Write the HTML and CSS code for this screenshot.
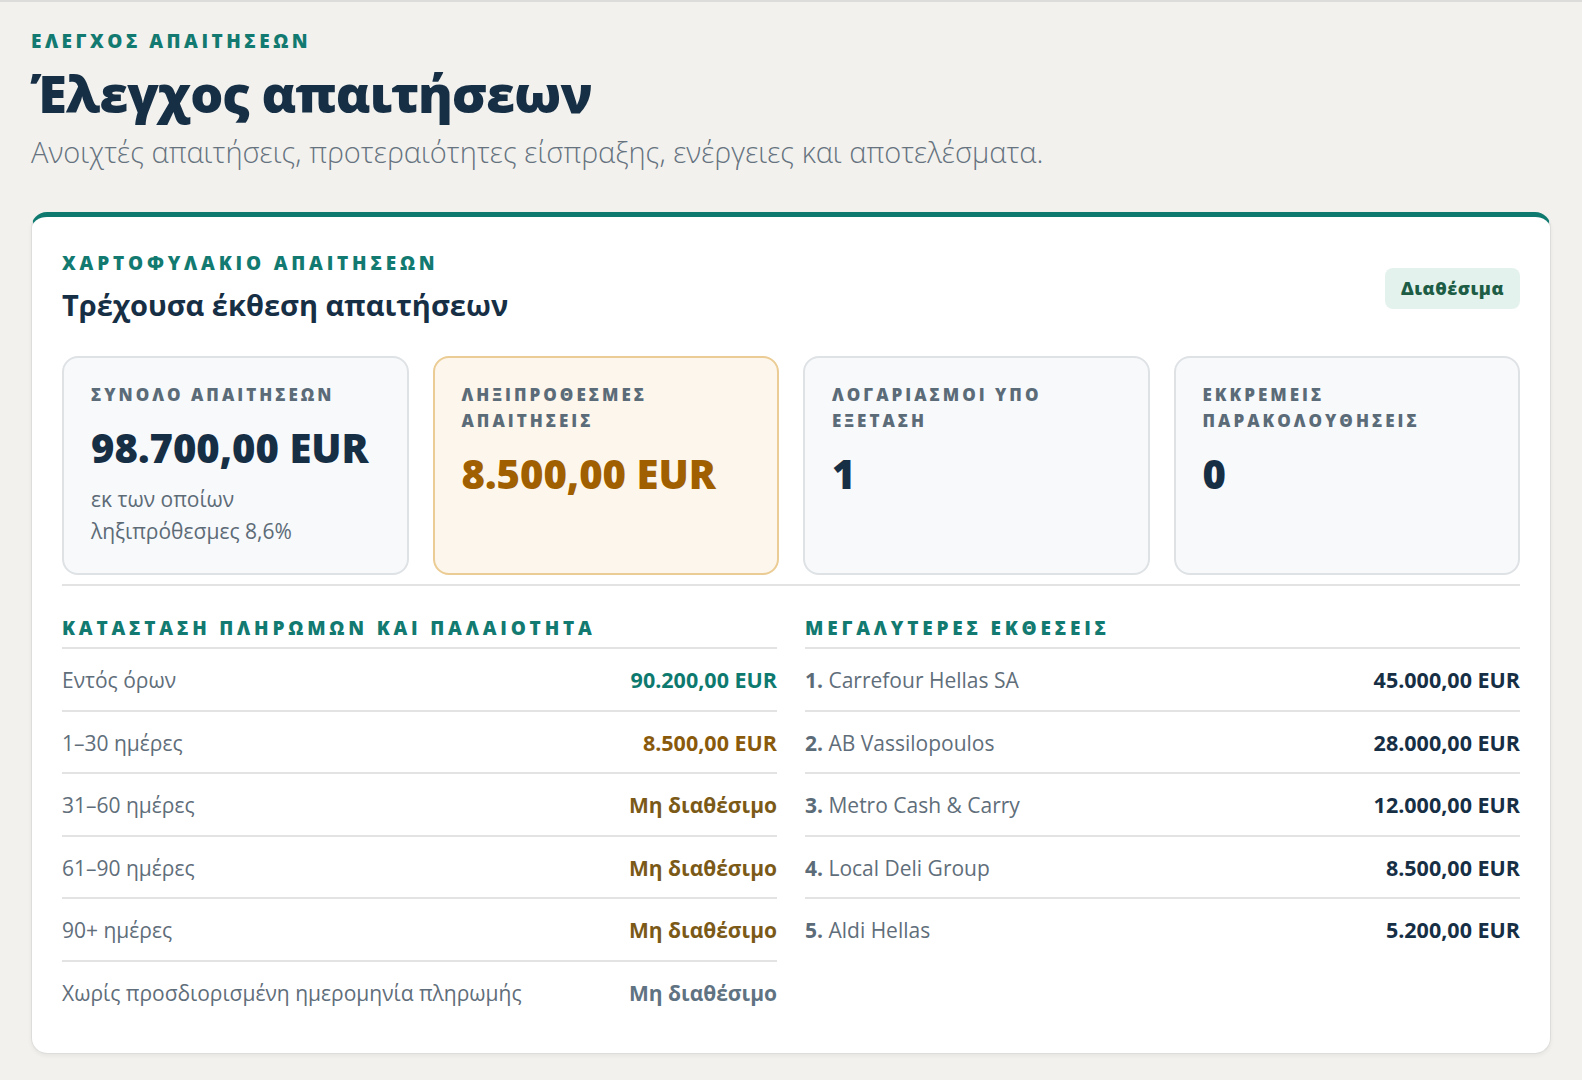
FILE: index.html
```html
<!DOCTYPE html>
<html lang="el">
<head>
<meta charset="utf-8">
<title>Έλεγχος απαιτήσεων</title>
<link rel="stylesheet" href="styles.css">
</head>
<body>
<main class="page">
  <header class="page-head">
    <p class="eyebrow">ΕΛΕΓΧΟΣ ΑΠΑΙΤΗΣΕΩΝ</p>
    <h1 class="page-title">Έλεγχος απαιτήσεων</h1>
    <p class="page-sub">Ανοιχτές απαιτήσεις, προτεραιότητες είσπραξης, ενέργειες και αποτελέσματα.</p>
  </header>

  <section class="card">
    <div class="card-head">
      <div>
        <p class="card-eyebrow">ΧΑΡΤΟΦΥΛΑΚΙΟ ΑΠΑΙΤΗΣΕΩΝ</p>
        <h2 class="card-title">Τρέχουσα έκθεση απαιτήσεων</h2>
      </div>
      <span class="badge">Διαθέσιμα</span>
    </div>

    <div class="stats">
      <div class="stat">
        <p class="stat-label">ΣΥΝΟΛΟ ΑΠΑΙΤΗΣΕΩΝ</p>
        <p class="stat-value">98.700,00 EUR</p>
        <p class="stat-note">εκ των οποίων ληξιπρόθεσμες 8,6%</p>
      </div>
      <div class="stat stat-warn">
        <p class="stat-label">ΛΗΞΙΠΡΟΘΕΣΜΕΣ ΑΠΑΙΤΗΣΕΙΣ</p>
        <p class="stat-value">8.500,00 EUR</p>
      </div>
      <div class="stat">
        <p class="stat-label">ΛΟΓΑΡΙΑΣΜΟΙ ΥΠΟ ΕΞΕΤΑΣΗ</p>
        <p class="stat-value">1</p>
      </div>
      <div class="stat">
        <p class="stat-label">ΕΚΚΡΕΜΕΙΣ ΠΑΡΑΚΟΛΟΥΘΗΣΕΙΣ</p>
        <p class="stat-value">0</p>
      </div>
    </div>

    <div class="columns">
      <div class="col">
        <h3 class="col-title">ΚΑΤΑΣΤΑΣΗ ΠΛΗΡΩΜΩΝ ΚΑΙ ΠΑΛΑΙΟΤΗΤΑ</h3>
        <ul class="rows">
          <li class="row"><span class="row-label">Εντός όρων</span><span class="row-val v-teal">90.200,00 EUR</span></li>
          <li class="row"><span class="row-label">1–30 ημέρες</span><span class="row-val v-brown">8.500,00 EUR</span></li>
          <li class="row"><span class="row-label">31–60 ημέρες</span><span class="row-val v-na v-olive">Μη διαθέσιμο</span></li>
          <li class="row"><span class="row-label">61–90 ημέρες</span><span class="row-val v-na v-olive">Μη διαθέσιμο</span></li>
          <li class="row"><span class="row-label">90+ ημέρες</span><span class="row-val v-na v-olive">Μη διαθέσιμο</span></li>
          <li class="row"><span class="row-label">Χωρίς προσδιορισμένη ημερομηνία πληρωμής</span><span class="row-val v-na v-gray">Μη διαθέσιμο</span></li>
        </ul>
      </div>
      <div class="col">
        <h3 class="col-title">ΜΕΓΑΛΥΤΕΡΕΣ ΕΚΘΕΣΕΙΣ</h3>
        <ul class="rows">
          <li class="row"><span class="row-label"><b class="rank">1.</b> Carrefour Hellas SA</span><span class="row-val v-navy">45.000,00 EUR</span></li>
          <li class="row"><span class="row-label"><b class="rank">2.</b> AB Vassilopoulos</span><span class="row-val v-navy">28.000,00 EUR</span></li>
          <li class="row"><span class="row-label"><b class="rank">3.</b> Metro Cash &amp; Carry</span><span class="row-val v-navy">12.000,00 EUR</span></li>
          <li class="row"><span class="row-label"><b class="rank">4.</b> Local Deli Group</span><span class="row-val v-navy">8.500,00 EUR</span></li>
          <li class="row"><span class="row-label"><b class="rank">5.</b> Aldi Hellas</span><span class="row-val v-navy">5.200,00 EUR</span></li>
        </ul>
      </div>
    </div>
  </section>
</main>
</body>
</html>
```

FILE: styles.css
```css
* { box-sizing: border-box; }

html, body {
  margin: 0;
  padding: 0;
}

body {
  background: #f2f1ee;
  border-top: 2px solid #dcdcda;
  font-family: "Open Sans", "Noto Sans", "DejaVu Sans", sans-serif;
  color: #172f45;
}

.page {
  padding: 27px 31px 30px;
}

.page-head p,
.page-head h1 { margin: 0; }

.eyebrow {
  font-size: 19px;
  line-height: 24px;
  font-weight: 800;
  letter-spacing: 3.5px;
  color: #127a70;
}

.page-title {
  margin-top: 8px !important;
  font-size: 52px;
  line-height: 64px;
  font-weight: 800;
  letter-spacing: -1px;
  color: #172f45;
}

.page-sub {
  margin-top: 8px !important;
  font-size: 29px;
  line-height: 38px;
  font-weight: 300;
  color: #66737e;
}

.card {
  margin-top: 41px;
  background: #ffffff;
  border: 1px solid #dddddb;
  border-top: 5px solid #0e7a6f;
  border-radius: 16px;
  box-shadow: 0 2px 4px rgba(0, 0, 0, 0.05);
  padding: 34px 30px 31px;
}

.card-head {
  display: flex;
  justify-content: space-between;
  align-items: center;
}

.card-eyebrow {
  margin: 0;
  font-size: 19px;
  line-height: 24px;
  font-weight: 800;
  letter-spacing: 3.8px;
  color: #127a70;
}

.card-title {
  margin: 10px 0 0;
  font-size: 29px;
  line-height: 40px;
  font-weight: 700;
  color: #172f45;
}

.badge {
  display: inline-block;
  padding: 7px 16px;
  border-radius: 8px;
  background: #e4f2ee;
  color: #1d5d45;
  font-size: 18px;
  line-height: 27px;
  font-weight: 800;
  letter-spacing: 0.5px;
}

.stats {
  margin-top: 31px;
  display: grid;
  grid-template-columns: repeat(4, 1fr);
  gap: 24px;
  padding-bottom: 9px;
  border-bottom: 2px solid #e3e3e3;
}

.stat {
  height: 219px;
  background: #f7f9fb;
  border: 2px solid #dfe2e5;
  border-radius: 16px;
  padding: 24px 27px;
}

.stat p { margin: 0; }

.stat-warn {
  background: #fdf6ec;
  border-color: #ebcc94;
}

.stat-label {
  font-size: 17px;
  line-height: 26px;
  font-weight: 800;
  letter-spacing: 3px;
  color: #5b6b78;
  max-width: 260px;
}

.stat-value {
  margin-top: 15px !important;
  font-size: 40px;
  line-height: 50px;
  font-weight: 800;
  color: #172f45;
}

.stat-warn .stat-value { color: #a05f00; }

.stat-note {
  margin-top: 10px !important;
  font-size: 21px;
  line-height: 32px;
  color: #5d6b77;
  max-width: 240px;
}

.columns {
  margin-top: 30px;
  display: grid;
  grid-template-columns: 1fr 1fr;
  gap: 28px;
}

.col-title {
  margin: 0;
  padding-bottom: 6px;
  border-bottom: 2px solid #e3e3e3;
  font-size: 19px;
  line-height: 25px;
  font-weight: 800;
  letter-spacing: 3.8px;
  color: #127a70;
}

.rows {
  list-style: none;
  margin: 0;
  padding: 0;
}

.row {
  display: flex;
  justify-content: space-between;
  align-items: center;
  padding: 17px 0 15px;
  line-height: 28.5px;
  font-size: 21px;
  border-bottom: 2px solid #e3e3e3;
}

.row:last-child { border-bottom: none; }

.row-label {
  color: #5f6e7a;
  font-weight: 400;
}

.rank {
  font-weight: 700;
  color: #5b6b78;
}

.row-val {
  font-weight: 700;
  font-size: 21.5px;
}

.row-val.v-na { font-size: 21px; }

.v-teal { color: #0e7a6f; }
.v-brown { color: #8a5a0c; }
.v-olive { color: #7b5a18; }
.v-gray { color: #5f7382; }
.v-navy { color: #172f45; }
```
